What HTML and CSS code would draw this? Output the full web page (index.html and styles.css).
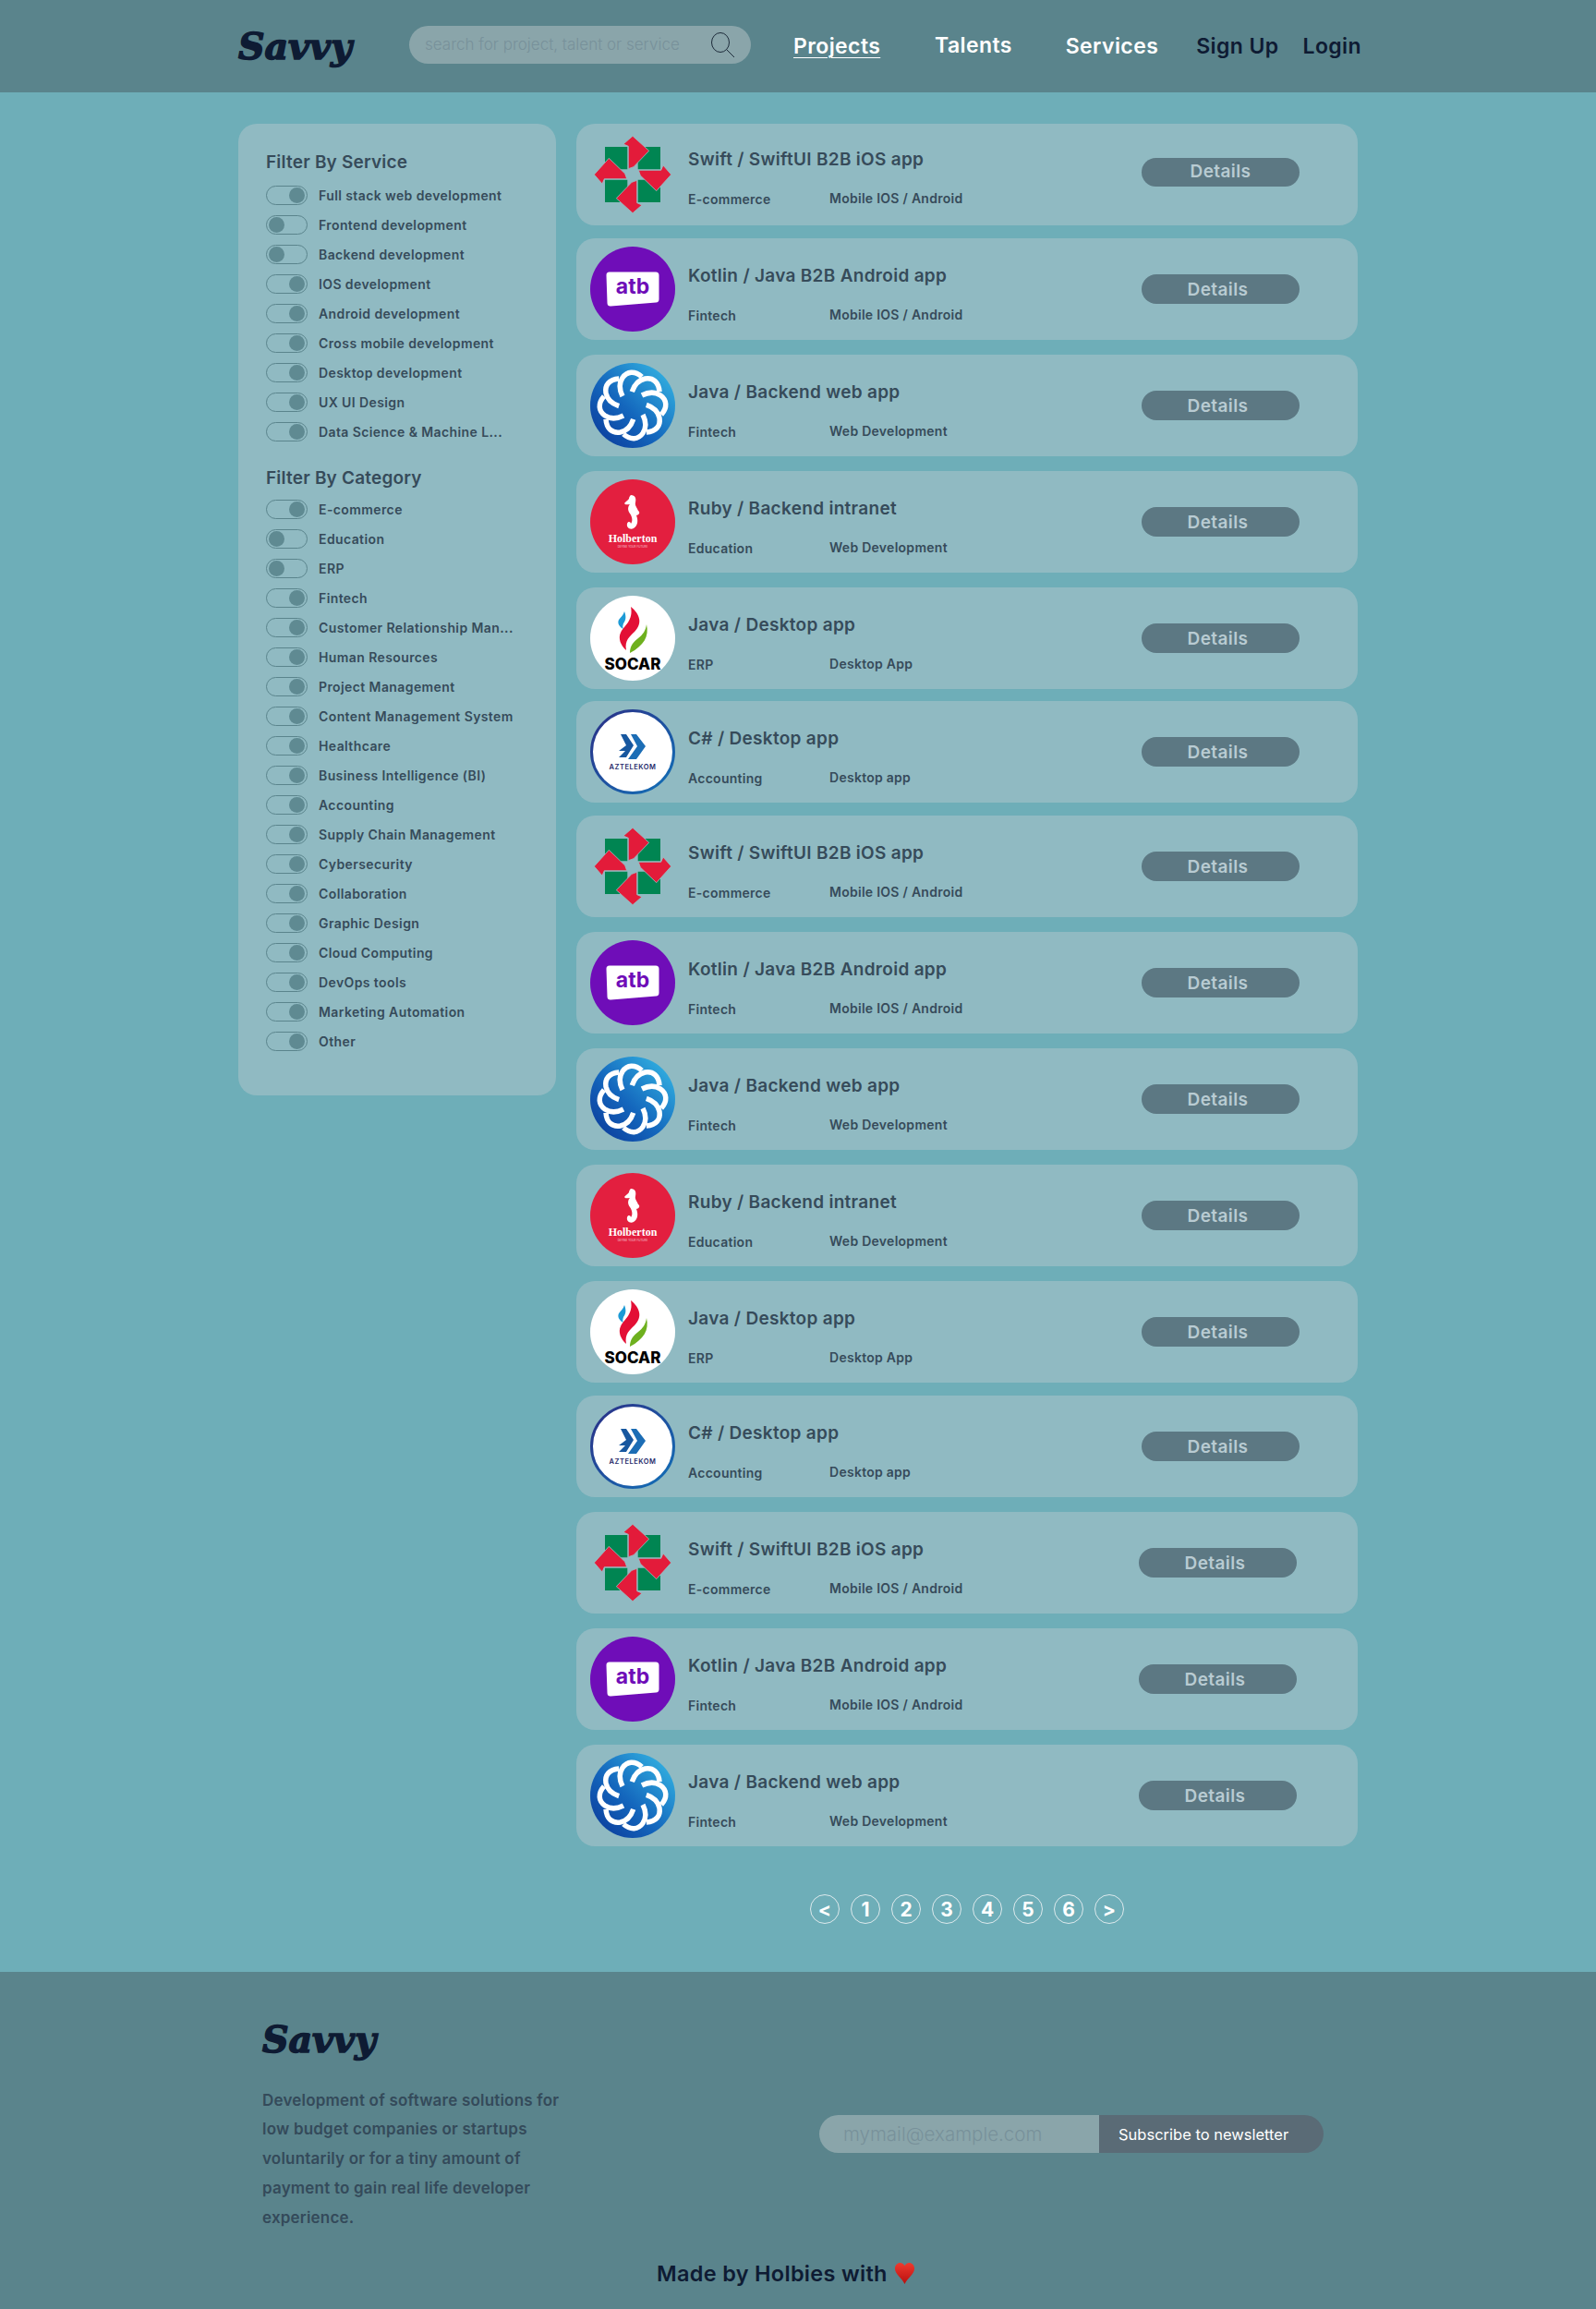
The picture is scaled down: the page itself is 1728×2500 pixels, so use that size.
FILE: index.html
```html
<!DOCTYPE html>
<html>
<head>
    <title>Savvy - Projects</title>
    <link rel="stylesheet" href="styles.css">
</head>
<body>
    <svg class="logo-defs" aria-hidden="true">
        <defs>
            <linearGradient id="bank-bg" x1="0" y1="1" x2="1" y2="0">
                <stop offset="0" stop-color="#0a3596"/>
                <stop offset="0.45" stop-color="#1467bd"/>
                <stop offset="1" stop-color="#38bfe8"/>
            </linearGradient>
            <linearGradient id="telekom-ring" x1="0" y1="0" x2="1" y2="1">
                <stop offset="0" stop-color="#2b2f86"/>
                <stop offset="1" stop-color="#1271b8"/>
            </linearGradient>
            <symbol id="logo-star" viewBox="0 0 92 92">
                <path d="M16 16H40.3V40.3H16ZM51.7 16H76V40.3H51.7ZM16 51.7H40.3V76H16ZM51.7 51.7H76V76H51.7Z" fill="#008552"/>
                <g fill="#e31b3a" stroke="#9cc0c4" stroke-width="0.8">
                    <path d="M36 13L46 4.3 63.7 20.3 47 37.7 41.3 39.7 41.3 15.3Z"/>
                    <path d="M36 13L46 4.3 63.7 20.3 47 37.7 41.3 39.7 41.3 15.3Z" transform="rotate(90 46 46)"/>
                    <path d="M36 13L46 4.3 63.7 20.3 47 37.7 41.3 39.7 41.3 15.3Z" transform="rotate(180 46 46)"/>
                    <path d="M36 13L46 4.3 63.7 20.3 47 37.7 41.3 39.7 41.3 15.3Z" transform="rotate(270 46 46)"/>
                </g>
            </symbol>
            <symbol id="logo-atb" viewBox="0 0 92 92">
                <circle cx="46" cy="46" r="46" fill="#6f0db8"/>
                <path d="M21 31H71V57L22 61Z" fill="#fff" stroke="#fff" stroke-width="7" stroke-linejoin="round"/>
                <text x="46" y="50.500" class="logo-atb-text">atb</text>
            </symbol>
            <symbol id="logo-bank" viewBox="0 0 92 92">
                <circle cx="46" cy="46" r="46" fill="url(#bank-bg)"/>
                <g fill="none" stroke="#fff" stroke-width="5.500" stroke-linejoin="round">
                    <path d="M56 15C48 8 40 9 35 16 31 22 31 28 35 36"/>
                    <path d="M56 15C48 8 40 9 35 16 31 22 31 28 35 36" transform="rotate(45 46 46)"/>
                    <path d="M56 15C48 8 40 9 35 16 31 22 31 28 35 36" transform="rotate(90 46 46)"/>
                    <path d="M56 15C48 8 40 9 35 16 31 22 31 28 35 36" transform="rotate(135 46 46)"/>
                    <path d="M56 15C48 8 40 9 35 16 31 22 31 28 35 36" transform="rotate(180 46 46)"/>
                    <path d="M56 15C48 8 40 9 35 16 31 22 31 28 35 36" transform="rotate(225 46 46)"/>
                    <path d="M56 15C48 8 40 9 35 16 31 22 31 28 35 36" transform="rotate(270 46 46)"/>
                    <path d="M56 15C48 8 40 9 35 16 31 22 31 28 35 36" transform="rotate(315 46 46)"/>
                </g>
            </symbol>
            <symbol id="logo-holberton" viewBox="0 0 92 92">
                <circle cx="46" cy="46" r="46" fill="#e31f3f"/>
                <path d="M44 17C49 17 50 21 49 25 48 28 51 31 52 34 55 36 52 39 50 39 52 44 52 50 47 53 43 55 39 52 40 48 41 45 44 46 44 48 46 46 46 41 43 37 40 33 41 29 43 27 40 27 38 28 37 26 38 24 41 23 42 21 42 19 43 18 44 17Z" fill="#fff"/>
                <text x="46" y="68" class="logo-holberton-name">Holberton</text>
                <text x="46" y="74" class="logo-holberton-tag">DEFINE YOUR FUTURE</text>
            </symbol>
            <symbol id="logo-socar" viewBox="0 0 92 92">
                <circle cx="46" cy="46" r="46" fill="#fff"/>
                <path d="M37 17C39 22 39 26 36 30 35 33 35 35 36 36 32 34 29 30 31 26 33 23 36 21 37 17Z" fill="#1c9ad6"/>
                <path d="M44 12C54 20 57 30 48 39 43 44 37 48 39 59 33 54 30 46 33 40 37 32 47 27 44 12Z" fill="#e30f35"/>
                <path d="M61 31C64 44 58 54 43 62 43 54 47 50 52 46 57 42 60 38 61 31Z" fill="#6eb01e"/>
                <text x="46" y="80" class="logo-socar-text">SOCAR</text>
            </symbol>
            <symbol id="logo-telekom" viewBox="0 0 92 92">
                <circle cx="46" cy="46" r="44.500" fill="#fff" stroke="url(#telekom-ring)" stroke-width="3"/>
                <path d="M33 27H39L47 39 39 52H31L38 45H31L39 39Z" fill="#17579f"/>
                <path d="M44 27H50L60 40 50 54H41L51 40Z" fill="#1c6db5"/>
                <text x="46" y="65" class="logo-telekom-text">AZTELEKOM</text>
            </symbol>
        </defs>
    </svg>

    <header class="top-bar">
        <a class="brand" href="#">Savvy</a>
        <form class="search" action="#">
            <input type="text" placeholder="search for project, talent or service">
            <svg width="27" height="27" viewBox="0 0 27 27" fill="none" stroke="#1d2b3a" stroke-width="1">
                <ellipse cx="11" cy="11" rx="9.500" ry="10.500"/>
                <path d="M17.500 18.500L26 27"/>
            </svg>
        </form>
        <nav class="nav">
            <a class="nav-link nav-projects" href="#">Projects</a>
            <a class="nav-link nav-talents" href="#">Talents</a>
            <a class="nav-link nav-services" href="#">Services</a>
            <a class="nav-link nav-dark nav-signup" href="#">Sign Up</a>
            <a class="nav-link nav-dark nav-login" href="#">Login</a>
        </nav>
    </header>

    <main class="content">
        <aside class="filters">
            <h3 class="filter-title">Filter By Service</h3>
            <div class="filter-row"><span class="toggle on"></span><span>Full stack web development</span></div>
            <div class="filter-row off"><span class="toggle"></span><span>Frontend development</span></div>
            <div class="filter-row off"><span class="toggle"></span><span>Backend development</span></div>
            <div class="filter-row"><span class="toggle on"></span><span>IOS development</span></div>
            <div class="filter-row"><span class="toggle on"></span><span>Android development</span></div>
            <div class="filter-row"><span class="toggle on"></span><span>Cross mobile development</span></div>
            <div class="filter-row"><span class="toggle on"></span><span>Desktop development</span></div>
            <div class="filter-row"><span class="toggle on"></span><span>UX UI Design</span></div>
            <div class="filter-row"><span class="toggle on"></span><span>Data Science &amp; Machine L...</span></div>

            <h3 class="filter-title filter-title-second">Filter By Category</h3>
            <div class="filter-row"><span class="toggle on"></span><span>E-commerce</span></div>
            <div class="filter-row off"><span class="toggle"></span><span>Education</span></div>
            <div class="filter-row off"><span class="toggle"></span><span>ERP</span></div>
            <div class="filter-row"><span class="toggle on"></span><span>Fintech</span></div>
            <div class="filter-row"><span class="toggle on"></span><span>Customer Relationship Man...</span></div>
            <div class="filter-row"><span class="toggle on"></span><span>Human Resources</span></div>
            <div class="filter-row"><span class="toggle on"></span><span>Project Management</span></div>
            <div class="filter-row"><span class="toggle on"></span><span>Content Management System</span></div>
            <div class="filter-row"><span class="toggle on"></span><span>Healthcare</span></div>
            <div class="filter-row"><span class="toggle on"></span><span>Business Intelligence (BI)</span></div>
            <div class="filter-row"><span class="toggle on"></span><span>Accounting</span></div>
            <div class="filter-row"><span class="toggle on"></span><span>Supply Chain Management</span></div>
            <div class="filter-row"><span class="toggle on"></span><span>Cybersecurity</span></div>
            <div class="filter-row"><span class="toggle on"></span><span>Collaboration</span></div>
            <div class="filter-row"><span class="toggle on"></span><span>Graphic Design</span></div>
            <div class="filter-row"><span class="toggle on"></span><span>Cloud Computing</span></div>
            <div class="filter-row"><span class="toggle on"></span><span>DevOps tools</span></div>
            <div class="filter-row"><span class="toggle on"></span><span>Marketing Automation</span></div>
            <div class="filter-row"><span class="toggle on"></span><span>Other</span></div>
        </aside>

        <section class="projects">
            <div class="cards">
                <article class="card card-swift">
                    <svg class="card-logo"><use href="#logo-star"/></svg>
                    <div class="card-body">
                        <h4 class="card-title">Swift / SwiftUI B2B iOS app</h4>
                        <div class="card-meta"><span class="meta-category">E-commerce</span><span class="meta-type">Mobile IOS / Android</span></div>
                    </div>
                    <a class="details" href="#">Details</a>
                </article>
                <article class="card card-tight">
                    <svg class="card-logo"><use href="#logo-atb"/></svg>
                    <div class="card-body">
                        <h4 class="card-title">Kotlin / Java B2B Android app</h4>
                        <div class="card-meta"><span class="meta-category">Fintech</span><span class="meta-type">Mobile IOS / Android</span></div>
                    </div>
                    <a class="details" href="#">Details</a>
                </article>
                <article class="card">
                    <svg class="card-logo"><use href="#logo-bank"/></svg>
                    <div class="card-body">
                        <h4 class="card-title">Java / Backend web app</h4>
                        <div class="card-meta"><span class="meta-category">Fintech</span><span class="meta-type">Web Development</span></div>
                    </div>
                    <a class="details" href="#">Details</a>
                </article>
                <article class="card">
                    <svg class="card-logo"><use href="#logo-holberton"/></svg>
                    <div class="card-body">
                        <h4 class="card-title">Ruby / Backend intranet</h4>
                        <div class="card-meta"><span class="meta-category">Education</span><span class="meta-type">Web Development</span></div>
                    </div>
                    <a class="details" href="#">Details</a>
                </article>
                <article class="card">
                    <svg class="card-logo"><use href="#logo-socar"/></svg>
                    <div class="card-body">
                        <h4 class="card-title">Java / Desktop app</h4>
                        <div class="card-meta"><span class="meta-category">ERP</span><span class="meta-type">Desktop App</span></div>
                    </div>
                    <a class="details" href="#">Details</a>
                </article>
                <article class="card card-tighter">
                    <svg class="card-logo"><use href="#logo-telekom"/></svg>
                    <div class="card-body">
                        <h4 class="card-title">C# / Desktop app</h4>
                        <div class="card-meta"><span class="meta-category">Accounting</span><span class="meta-type">Desktop app</span></div>
                    </div>
                    <a class="details" href="#">Details</a>
                </article>
                <article class="card card-tight">
                    <svg class="card-logo"><use href="#logo-star"/></svg>
                    <div class="card-body">
                        <h4 class="card-title">Swift / SwiftUI B2B iOS app</h4>
                        <div class="card-meta"><span class="meta-category">E-commerce</span><span class="meta-type">Mobile IOS / Android</span></div>
                    </div>
                    <a class="details" href="#">Details</a>
                </article>
                <article class="card">
                    <svg class="card-logo"><use href="#logo-atb"/></svg>
                    <div class="card-body">
                        <h4 class="card-title">Kotlin / Java B2B Android app</h4>
                        <div class="card-meta"><span class="meta-category">Fintech</span><span class="meta-type">Mobile IOS / Android</span></div>
                    </div>
                    <a class="details" href="#">Details</a>
                </article>
                <article class="card">
                    <svg class="card-logo"><use href="#logo-bank"/></svg>
                    <div class="card-body">
                        <h4 class="card-title">Java / Backend web app</h4>
                        <div class="card-meta"><span class="meta-category">Fintech</span><span class="meta-type">Web Development</span></div>
                    </div>
                    <a class="details" href="#">Details</a>
                </article>
                <article class="card">
                    <svg class="card-logo"><use href="#logo-holberton"/></svg>
                    <div class="card-body">
                        <h4 class="card-title">Ruby / Backend intranet</h4>
                        <div class="card-meta"><span class="meta-category">Education</span><span class="meta-type">Web Development</span></div>
                    </div>
                    <a class="details" href="#">Details</a>
                </article>
                <article class="card">
                    <svg class="card-logo"><use href="#logo-socar"/></svg>
                    <div class="card-body">
                        <h4 class="card-title">Java / Desktop app</h4>
                        <div class="card-meta"><span class="meta-category">ERP</span><span class="meta-type">Desktop App</span></div>
                    </div>
                    <a class="details" href="#">Details</a>
                </article>
                <article class="card card-tight">
                    <svg class="card-logo"><use href="#logo-telekom"/></svg>
                    <div class="card-body">
                        <h4 class="card-title">C# / Desktop app</h4>
                        <div class="card-meta"><span class="meta-category">Accounting</span><span class="meta-type">Desktop app</span></div>
                    </div>
                    <a class="details" href="#">Details</a>
                </article>
                <article class="card card-wide-gap">
                    <svg class="card-logo"><use href="#logo-star"/></svg>
                    <div class="card-body">
                        <h4 class="card-title">Swift / SwiftUI B2B iOS app</h4>
                        <div class="card-meta"><span class="meta-category">E-commerce</span><span class="meta-type">Mobile IOS / Android</span></div>
                    </div>
                    <a class="details" href="#">Details</a>
                </article>
                <article class="card card-wide-gap">
                    <svg class="card-logo"><use href="#logo-atb"/></svg>
                    <div class="card-body">
                        <h4 class="card-title">Kotlin / Java B2B Android app</h4>
                        <div class="card-meta"><span class="meta-category">Fintech</span><span class="meta-type">Mobile IOS / Android</span></div>
                    </div>
                    <a class="details" href="#">Details</a>
                </article>
                <article class="card card-wide-gap">
                    <svg class="card-logo"><use href="#logo-bank"/></svg>
                    <div class="card-body">
                        <h4 class="card-title">Java / Backend web app</h4>
                        <div class="card-meta"><span class="meta-category">Fintech</span><span class="meta-type">Web Development</span></div>
                    </div>
                    <a class="details" href="#">Details</a>
                </article>
            </div>

            <div class="pagination">
                <a class="page" href="#">&lt;</a>
                <a class="page" href="#">1</a>
                <a class="page" href="#">2</a>
                <a class="page" href="#">3</a>
                <a class="page" href="#">4</a>
                <a class="page" href="#">5</a>
                <a class="page" href="#">6</a>
                <a class="page" href="#">&gt;</a>
            </div>
        </section>
    </main>

    <footer class="footer">
        <div class="footer-main">
            <div class="footer-about">
                <a class="brand" href="#">Savvy</a>
                <p class="footer-text">Development of software solutions for low budget companies or startups voluntarily or for a tiny amount of payment to gain real life developer experience.</p>
            </div>
            <form class="subscribe" action="#">
                <input type="email" placeholder="mymail@example.com">
                <button type="submit">Subscribe to newsletter</button>
            </form>
        </div>
        <div class="made-by">
            <span>Made by Holbies with</span>
            <svg width="23" height="23" viewBox="0 0 24 24">
                <defs>
                    <linearGradient id="heart-fill" x1="0" y1="0" x2="0" y2="1">
                        <stop offset="0" stop-color="#ef3a2e"/>
                        <stop offset="1" stop-color="#b80f0f"/>
                    </linearGradient>
                </defs>
                <path d="M12 24C9 17 1 13 1 6.500 1 2.500 4 0 6.800 0 9.200 0 11 1.500 12 3.500 13 1.500 14.800 0 17.200 0 20 0 23 2.500 23 6.500 23 13 15 17 12 24Z" fill="url(#heart-fill)"/>
            </svg>
        </div>
    </footer>
</body>
</html>
```

FILE: styles.css
```css
* {
    box-sizing: border-box;
}

body {
    margin: 0;
    background-color: #6eaeb8;
    color: #364b5a;
    font-family: Inter, "Open Sans", Arial, sans-serif;
}

a {
    text-decoration: none;
    color: inherit;
}

.logo-defs {
    width: 0;
    height: 0;
    display: block;
}

/* header */
.top-bar {
    height: 100px;
    padding-left: 258px;
    display: flex;
    align-items: center;
    background-color: #5a848c;
}

.brand {
    display: block;
    width: 127px;
    color: #0e1b33;
    font-family: "DejaVu Serif", "Liberation Serif", serif;
    font-size: 39.500px;
    line-height: 44px;
    font-weight: 700;
    font-style: italic;
    -webkit-text-stroke: 1.600px #0e1b33;
    white-space: nowrap;
}

.search {
    width: 370px;
    height: 41px;
    margin-left: 58px;
    margin-top: -4px;
    padding: 0 17px 0 17px;
    display: flex;
    align-items: center;
    border-radius: 21px;
    background-color: #8aa5aa;
}

.search input {
    flex: 1;
    min-width: 0;
    border: none;
    outline: none;
    padding: 0;
    background: transparent;
    font-family: inherit;
    font-size: 17px;
    font-weight: 300;
}

.search input::placeholder {
    color: #78919a;
    opacity: 1;
}

.nav {
    margin-left: 46px;
    display: flex;
    align-items: center;
}

.nav-link {
    color: #fff;
    font-size: 23px;
    font-weight: 600;
    letter-spacing: 0.4px;
    line-height: 28px;
}

.nav-projects {
    width: 95px;
    text-decoration: underline;
    text-underline-offset: 4px;
    text-decoration-thickness: 1px;
}

.nav-talents {
    margin-left: 58px;
    margin-bottom: 3px;
}

.nav-services {
    margin-left: 58px;
}

.nav-dark {
    color: #0e1b33;
}

.nav-signup {
    margin-left: 41px;
}

.nav-login {
    margin-left: 26px;
}

/* main part */
.content {
    padding: 34px 0 52px 258px;
    display: flex;
    align-items: flex-start;
    gap: 22px;
}

.filters {
    width: 344px;
    padding: 30px 30px 36.500px;
    border-radius: 20px;
    background-color: #90bac2;
}

.filter-title {
    margin: 0 0 13px;
    color: #364b5a;
    font-size: 19px;
    line-height: 24px;
    font-weight: 600;
    letter-spacing: 0.2px;
}

.filter-title-second {
    margin-top: 27.500px;
    margin-bottom: 11.500px;
}

.filter-row {
    height: 21px;
    margin-bottom: 11px;
    display: flex;
    align-items: center;
    gap: 12px;
    color: #364b5a;
    font-size: 14px;
    font-weight: 600;
    letter-spacing: 0.4px;
    white-space: nowrap;
}

.filter-row.off {
    margin-top: 1.400px;
}

.toggle {
    flex: none;
    width: 45px;
    height: 21px;
    padding: 1px 2px;
    display: flex;
    justify-content: flex-start;
    align-items: center;
    border: 1px solid #5a848c;
    border-radius: 11px;
}

.toggle.on {
    justify-content: flex-end;
    padding-right: 2px;
}

.toggle::after {
    content: "";
    width: 17px;
    height: 17px;
    border-radius: 50%;
    background-color: #5f8a92;
}

/* project cards */
.projects {
    width: 846px;
}

.cards {
    display: flex;
    flex-direction: column;
    gap: 16px;
}

.card {
    height: 110px;
    padding: 0 15px;
    display: flex;
    align-items: center;
    border-radius: 20px;
    background-color: #90bac2;
}

.card-tight {
    margin-top: -2px;
}

.card-tighter {
    margin-top: -3px;
}

.card-logo {
    flex: none;
    width: 92px;
    height: 92px;
}

.card-body {
    flex: none;
    width: 491px;
    margin-left: 14px;
    padding-top: 11px;
}

.card-swift .card-body {
    padding-top: 10px;
    margin-top: -2px;
}

.card-title {
    margin: 0;
    color: #364b5a;
    font-size: 19px;
    line-height: 24px;
    font-weight: 600;
    letter-spacing: 0.3px;
}

.card-meta {
    margin-top: 22px;
    display: flex;
    color: #364b5a;
    font-size: 14px;
    line-height: 18px;
    font-weight: 600;
    letter-spacing: 0.27px;
}

.meta-category {
    width: 153px;
}

.meta-type {
    margin-top: -1px;
}

.details {
    width: 171px;
    height: 32px;
    padding-right: 6px;
    display: flex;
    align-items: center;
    justify-content: center;
    border-radius: 16px;
    background-color: #5c7883;
    color: #b8cbd2;
    font-size: 19px;
    font-weight: 600;
    letter-spacing: 0.4px;
}

.card-swift .details {
    margin-top: -5px;
    height: 31px;
    padding-right: 0;
    padding-bottom: 2px;
}

.card-wide-gap .details {
    margin-left: -3px;
}

.pagination {
    margin-top: 52px;
    display: flex;
    justify-content: center;
    gap: 12px;
}

.page {
    width: 32px;
    height: 32px;
    display: flex;
    align-items: center;
    justify-content: center;
    border: 1px solid #dce9ec;
    border-radius: 50%;
    color: #fff;
    font-size: 21px;
    font-weight: 700;
}

/* footer */
.footer {
    height: 365px;
    padding-top: 51px;
    background-color: #5a848c;
}

.footer-main {
    padding-left: 284px;
    display: flex;
}

.footer-text {
    width: 335px;
    margin: 28.500px 0 0;
    color: #344a5a;
    font-size: 17px;
    line-height: 31.800px;
    font-weight: 600;
    letter-spacing: 0.2px;
}

.subscribe {
    margin-left: 268px;
    margin-top: 104px;
    height: 41px;
    display: flex;
}

.subscribe input {
    width: 303px;
    padding: 0 0 0 26px;
    border: none;
    outline: none;
    border-radius: 21px 0 0 21px;
    background-color: #8aa5aa;
    font-family: inherit;
    font-size: 20.500px;
    font-weight: 300;
}

.subscribe input::placeholder {
    color: #78919a;
    opacity: 1;
}

.subscribe button {
    width: 243px;
    padding: 0 0 0 21px;
    text-align: left;
    border: none;
    border-radius: 0 21px 21px 0;
    background-color: #5a6b76;
    color: #fff;
    font-family: inherit;
    font-size: 16.500px;
    font-weight: 400;
}

.made-by {
    margin-top: 29.500px;
    padding-left: 711px;
    display: flex;
    align-items: center;
    gap: 7px;
    color: #0e1b33;
    font-size: 23.500px;
    font-weight: 600;
    letter-spacing: 0.3px;
}

/* text inside the logos */
.logo-atb-text {
    fill: #6f0db8;
    font-family: Inter, sans-serif;
    font-size: 23px;
    font-weight: 700;
    text-anchor: middle;
}

.logo-holberton-name {
    fill: #fff;
    font-family: "Liberation Serif", serif;
    font-size: 12px;
    font-weight: 700;
    text-anchor: middle;
}

.logo-holberton-tag {
    fill: #f6c6cf;
    font-family: Inter, sans-serif;
    font-size: 3px;
    text-anchor: middle;
}

.logo-socar-text {
    fill: #000;
    font-family: Inter, sans-serif;
    font-size: 17px;
    font-weight: 800;
    text-anchor: middle;
}

.logo-telekom-text {
    fill: #1f2a6b;
    font-family: Inter, sans-serif;
    font-size: 7.500px;
    font-weight: 600;
    letter-spacing: 0.5px;
    text-anchor: middle;
}
```
